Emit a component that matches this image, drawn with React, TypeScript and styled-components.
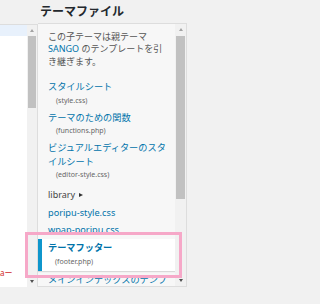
import React from 'react';
import styled, { createGlobalStyle } from 'styled-components';

const GlobalStyle = createGlobalStyle`
  html, body {
    margin: 0;
    padding: 0;
    background: #f1f1f1;
  }
  body {
    font-family: "Noto Sans", "Noto Sans CJK JP", sans-serif;
  }
`;

const Screen = styled.div`
  position: relative;
  display: flex;
  align-items: flex-start;
  width: 200px;
  height: 304px;
  overflow: hidden;
`;

const EditorColumn = styled.div`
  display: flex;
  flex-shrink: 0;
  width: 37px;
  height: 262px;
  margin-top: 24px;
  background: #fff;
  border-top: 1px solid #ddd;
  border-right: 1px solid #ddd;
`;

const CodeArea = styled.div`
  display: flex;
  flex-direction: column;
  width: 27px;
  overflow: hidden;
  padding-bottom: 8px;
  box-sizing: border-box;
`;

const ActiveLine = styled.div`
  height: 11px;
  background: #e8f1fc;
`;

const CodeLine = styled.div`
  margin-top: auto;
  font-size: 8px;
  line-height: 12px;
  color: #d02828;
  white-space: nowrap;
`;

const ScrollTrack = styled.div<{ $width: number }>`
  display: flex;
  flex-direction: column;
  align-items: center;
  flex-shrink: 0;
  width: ${(p) => p.$width}px;
  background: #f1f1f1;
`;

const ArrowBox = styled.div<{ $down?: boolean }>`
  display: flex;
  align-items: center;
  justify-content: center;
  width: 100%;
  height: 10px;
  margin-top: ${(p) => (p.$down ? 'auto' : '0')};
  margin-bottom: ${(p) => (p.$down ? '1px' : '0')};

  &::after {
    content: '';
    width: 0;
    height: 0;
    border-left: 2.5px solid transparent;
    border-right: 2.5px solid transparent;
    ${(p) =>
      p.$down
        ? 'border-top: 3px solid #505050;'
        : 'border-bottom: 3px solid #a3a3a3;'}
  }
`;

const Thumb = styled.div<{ $top: number; $height: number }>`
  width: calc(100% - 2px);
  margin-top: ${(p) => p.$top}px;
  height: ${(p) => p.$height}px;
  background: #c1c1c1;
`;

const SideColumn = styled.div`
  display: flex;
  flex-direction: column;
  flex-shrink: 0;
  width: 149px;
`;

const Heading = styled.h2`
  margin: 0;
  padding-left: 2px;
  height: 23px;
  font-size: 12px;
  line-height: 23px;
  font-weight: 700;
  color: #23282d;
  white-space: nowrap;
`;

const Panel = styled.div`
  display: flex;
  height: 262px;
  background: #f7f7f7;
  border: 1px solid #ddd;
  border-left: none;
`;

const FileList = styled.div`
  flex: 1;
  min-width: 0;
  overflow: hidden;
`;

const Description = styled.p`
  margin: 0 0 10px;
  padding: 6.75px 0 0 10px;
  font-size: 9px;
  line-height: 12.5px;
  color: #555;
  white-space: nowrap;
`;

const ParentLink = styled.span`
  color: #0073aa;
`;

const FileItem = styled.div`
  padding: 2px 0 2px 10px;
  white-space: nowrap;
`;

const FileName = styled.div<{ $current?: boolean }>`
  font-size: 9.2px;
  line-height: 13.5px;
  color: #0073aa;
  font-weight: ${(p) => (p.$current ? 700 : 400)};
`;

const FileSub = styled.div`
  padding-left: 8px;
  font-size: 7px;
  line-height: 13px;
  color: #666;
`;

const Folder = styled.div`
  display: flex;
  align-items: center;
  gap: 4px;
  padding: 5px 0 2px 10px;
  font-size: 9px;
  line-height: 13.5px;
  color: #444;

  &::after {
    content: '';
    width: 0;
    height: 0;
    border-top: 2.5px solid transparent;
    border-bottom: 2.5px solid transparent;
    border-left: 4px solid #333;
  }
`;

const CurrentFile = styled.div`
  padding: 2.5px 0 3.5px 6px;
  background: #fff;
  border-left: 4px solid #0f96cc;
  box-shadow: 0 1px 1px rgba(0, 0, 0, 0.12);
  white-space: nowrap;

  ${FileSub} {
    padding-left: 7px;
  }
`;

const Highlight = styled.div`
  position: absolute;
  left: 25px;
  top: 232px;
  width: 157px;
  height: 46px;
  box-sizing: border-box;
  border: 3px solid #f6a8c8;
  pointer-events: none;
`;

type FileEntry = { name: React.ReactNode; sub?: string };

const topFiles: FileEntry[] = [
  { name: 'スタイルシート', sub: '(style.css)' },
  { name: 'テーマのための関数', sub: '(functions.php)' },
  {
    name: (
      <>
        ビジュアルエディターのスタ
        <br />
        イルシート
      </>
    ),
    sub: '(editor-style.css)',
  },
];

const App = (): JSX.Element => {
  return (
    <>
      <GlobalStyle />
      <Screen>
        <EditorColumn>
          <CodeArea>
            <ActiveLine />
            <CodeLine>aー</CodeLine>
          </CodeArea>
          <ScrollTrack $width={10}>
            <ArrowBox />
            <Thumb $top={1} $height={72} />
            <ArrowBox $down />
          </ScrollTrack>
        </EditorColumn>
        <SideColumn>
          <Heading>テーマファイル</Heading>
          <Panel>
            <FileList>
              <Description>
                この子テーマは親テーマ
                <br />
                <ParentLink>SANGO</ParentLink> のテンプレートを引
                <br />
                き継ぎます。
              </Description>
              {topFiles.map((file, i) => (
                <FileItem key={i}>
                  <FileName>{file.name}</FileName>
                  {file.sub && <FileSub>{file.sub}</FileSub>}
                </FileItem>
              ))}
              <Folder>library</Folder>
              <FileItem>
                <FileName>poripu-style.css</FileName>
              </FileItem>
              <FileItem>
                <FileName>wpap-poripu.css</FileName>
              </FileItem>
              <CurrentFile>
                <FileName $current>テーマフッター</FileName>
                <FileSub>(footer.php)</FileSub>
              </CurrentFile>
              <FileItem>
                <FileName>メインインデックスのテンプ</FileName>
              </FileItem>
            </FileList>
            <ScrollTrack $width={11}>
              <ArrowBox />
              <Thumb $top={2} $height={163} />
              <ArrowBox $down />
            </ScrollTrack>
          </Panel>
        </SideColumn>
        <Highlight />
      </Screen>
    </>
  );
};

export default App;
